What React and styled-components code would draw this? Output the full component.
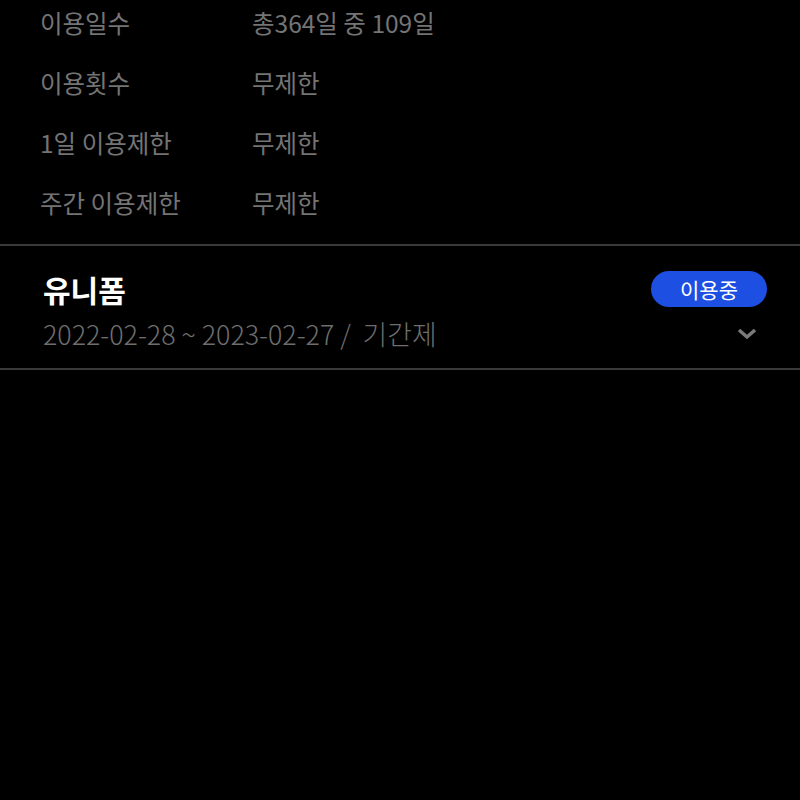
import styled, { createGlobalStyle } from "styled-components";

const GlobalStyle = createGlobalStyle`
  html, body {
    margin: 0;
    padding: 0;
    background: #000;
    font-family: "Noto Sans CJK KR", "Noto Sans", sans-serif;
  }
`;

const Page = styled.div`
  width: 800px;
  min-height: 800px;
  background: #000;
  overflow: hidden;
`;

const InfoList = styled.div`
  margin-top: -8px;
  padding: 0 40px 12px;
  display: flex;
  flex-direction: column;
`;

const InfoRow = styled.div`
  display: flex;
  align-items: center;
  height: 60px;
  font-size: 24.5px;
  color: #747474;
`;

const Label = styled.span`
  width: 212px;
`;

const Value = styled.span``;

const Divider = styled.div`
  height: 2px;
  background: #3a3a3a;
`;

const Pass = styled.div`
  padding: 24px 33px 16px 43px;
  display: flex;
  flex-direction: column;
`;

const PassTop = styled.div`
  display: flex;
  align-items: center;
  justify-content: space-between;
`;

const Title = styled.h2`
  margin: 0;
  font-size: 30px;
  font-weight: 700;
  color: #fff;
  line-height: 38px;
`;

const Badge = styled.span`
  display: inline-flex;
  align-items: center;
  justify-content: center;
  width: 116px;
  height: 36px;
  border-radius: 18px;
  background: #1e4fe3;
  color: #fff;
  font-size: 21px;
`;

const PassBottom = styled.div`
  display: flex;
  align-items: center;
  justify-content: space-between;
  margin-top: 8px;
`;

const Period = styled.span`
  font-size: 26.8px;
  font-weight: 300;
  color: #6e6e6e;
  line-height: 36px;
`;

const Chevron = styled.svg`
  width: 22px;
  height: 14px;
  margin-right: 9px;
`;

export default function App() {
  const rows = [
    ["이용일수", "총364일 중 109일"],
    ["이용횟수", "무제한"],
    ["1일 이용제한", "무제한"],
    ["주간 이용제한", "무제한"],
  ];
  return (
    <>
      <GlobalStyle />
      <Page>
        <InfoList>
          {rows.map(([l, v]) => (
            <InfoRow key={l}>
              <Label>{l}</Label>
              <Value>{v}</Value>
            </InfoRow>
          ))}
        </InfoList>
        <Divider />
        <Pass>
          <PassTop>
            <Title>유니폼</Title>
            <Badge>이용중</Badge>
          </PassTop>
          <PassBottom>
            <Period>2022-02-28 ~ 2023-02-27 /&nbsp; 기간제</Period>
            <Chevron viewBox="0 0 22 14">
              <path d="M3 3 L11 10 L19 3" fill="none" stroke="#7a7a7a" strokeWidth="3.5" />
            </Chevron>
          </PassBottom>
        </Pass>
        <Divider />
      </Page>
    </>
  );
}
